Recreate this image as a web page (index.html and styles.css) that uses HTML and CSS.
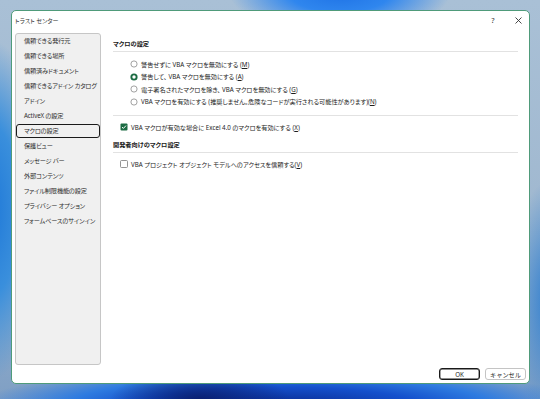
FILE: index.html
```html
<!DOCTYPE html>
<html lang="ja">
<head>
    <meta charset="UTF-8">
    <meta name="viewport" content="width=device-width, initial-scale=1.0">
    <title>トラスト センター</title>
    <link rel="stylesheet" href="styles.css">
</head>
<body>
    <div class="dialog">
        <!-- Title bar -->
        <div class="titlebar">
            <span class="title">トラスト センター</span>
            <span class="help">?</span>
            <span class="close">
                <svg width="7" height="7" viewBox="0 0 7 7"><path d="M0.5 0.5 L6.5 6.5 M6.5 0.5 L0.5 6.5" stroke="#333" stroke-width="0.9" fill="none"/></svg>
            </span>
        </div>

        <div class="main">
            <!-- Left navigation -->
            <ul class="nav">
                <li>信頼できる発行元</li>
                <li>信頼できる場所</li>
                <li>信頼済みドキュメント</li>
                <li>信頼できるアドイン カタログ</li>
                <li>アドイン</li>
                <li>ActiveX の設定</li>
                <li class="selected">マクロの設定</li>
                <li>保護ビュー</li>
                <li>メッセージ バー</li>
                <li>外部コンテンツ</li>
                <li>ファイル制限機能の設定</li>
                <li>プライバシー オプション</li>
                <li>フォームベースのサインイン</li>
            </ul>

            <!-- Settings pane -->
            <div class="content">
                <div class="section-title">マクロの設定</div>

                <div class="radio-list">
                    <div class="radio-row">
                        <svg class="radio" width="8" height="8" viewBox="0 0 8 8"><circle cx="4" cy="4" r="3.1" fill="#fff" stroke="#8a8a8a" stroke-width="0.8"/></svg>
                        <span>警告せずに VBA マクロを無効にする (<u>M</u>)</span>
                    </div>
                    <div class="radio-row">
                        <svg class="radio" width="8" height="8" viewBox="0 0 8 8"><circle cx="4" cy="4" r="3.6" fill="#1c6b43"/><circle cx="4" cy="4" r="1.7" fill="#fff"/></svg>
                        <span>警告して、 VBA マクロを無効にする (<u>A</u>)</span>
                    </div>
                    <div class="radio-row">
                        <svg class="radio" width="8" height="8" viewBox="0 0 8 8"><circle cx="4" cy="4" r="3.1" fill="#fff" stroke="#8a8a8a" stroke-width="0.8"/></svg>
                        <span>電子署名されたマクロを除き、 VBA マクロを無効にする (<u>G</u>)</span>
                    </div>
                    <div class="radio-row">
                        <svg class="radio" width="8" height="8" viewBox="0 0 8 8"><circle cx="4" cy="4" r="3.1" fill="#fff" stroke="#8a8a8a" stroke-width="0.8"/></svg>
                        <span>VBA マクロを有効にする (推奨しません。危険なコードが実行される可能性があります)(<u>N</u>)</span>
                    </div>
                </div>

                <div class="divider"></div>

                <div class="check-row">
                    <svg class="check" width="8" height="8" viewBox="0 0 8 8"><rect x="0.5" y="0.5" width="7" height="7" rx="1" fill="#1c6b43"/><path d="M2 4.1 L3.4 5.4 L6 2.6" stroke="#fff" stroke-width="1" fill="none"/></svg>
                    <span>VBA マクロが有効な場合に Excel 4.0 のマクロを有効にする (<u>X</u>)</span>
                </div>

                <div class="section-title second">開発者向けのマクロ設定</div>

                <div class="check-row">
                    <svg class="check" width="8" height="8" viewBox="0 0 8 8"><rect x="0.5" y="0.5" width="7" height="7" rx="1" fill="#fff" stroke="#7a7a7a" stroke-width="0.8"/></svg>
                    <span>VBA プロジェクト オブジェクト モデルへのアクセスを信頼する(<u>V</u>)</span>
                </div>
            </div>
        </div>

        <!-- Buttons -->
        <div class="footer">
            <button class="btn default">OK</button>
            <button class="btn">キャンセル</button>
        </div>
    </div>
</body>
</html>
```

FILE: styles.css
```css
html, body {
    margin: 0;
    padding: 0;
}

body {
    width: 540px;
    height: 399px;
    overflow: hidden;
    font-family: "Noto Sans", "Noto Sans CJK JP", sans-serif;
    font-feature-settings: "palt";
    color: #1c1c1c;
    background-color: #a3bbd2;
    background-image:
        radial-gradient(ellipse 110px 40px at 340px -6px, #1f73e6 0, #2f86ee 45%, rgba(90, 150, 230, 0) 100%),
        radial-gradient(ellipse 60px 170px at -10px 210px, #1e78d8 0, #3a8fdc 50%, rgba(120, 170, 220, 0) 100%),
        radial-gradient(ellipse 40px 120px at 550px 300px, #2f7fd0 0, rgba(110, 160, 210, 0) 100%),
        radial-gradient(ellipse 90px 30px at 200px 400px, #0a1f70 0, rgba(10, 31, 112, 0) 100%),
        radial-gradient(ellipse 300px 40px at 280px 405px, #0a2a8e 0, #1450cc 45%, #2e7be0 70%, rgba(120, 160, 210, 0) 100%),
        linear-gradient(180deg, #a9c0d6 0%, #9fb7cf 60%, #7f9fc4 100%);
}

.dialog {
    margin: 10px 0 0 11px;
    width: 519px;
    height: 374px;
    box-sizing: border-box;
    background-color: #fff;
    border: 1px solid #4f9b7a;
    border-radius: 5px;
    display: flex;
    flex-direction: column;
    font-size: 6.2px;
}

/* Title bar */
.titlebar {
    height: 18px;
    display: flex;
    align-items: center;
    padding-left: 3px;
}

.title {
    flex: 1;
    color: #333;
    font-size: 6px;
}

.help {
    width: 10px;
    text-align: center;
    font-size: 7.5px;
    color: #333;
    margin-right: 15px;
}

.close {
    width: 10px;
    display: flex;
    justify-content: center;
    margin-right: 6px;
}

/* Main area */
.main {
    display: flex;
    margin-top: 4px;
    padding: 0 11px 0 3px;
    gap: 12px;
}

.nav {
    list-style: none;
    margin: 0;
    padding: 0;
    width: 86px;
    height: 332px;
    box-sizing: border-box;
    background-color: #f0f0f0;
    border: 1px solid #c6c6c6;
    border-radius: 3px;
}

.nav li {
    height: 14px;
    line-height: 12.5px;
    margin-bottom: 1px;
    padding-left: 7px;
    box-sizing: border-box;
    color: #2e2e2e;
    white-space: nowrap;
    letter-spacing: -0.15px;
    border: 1px solid transparent;
    border-radius: 3px;
}

.nav li.selected {
    border-color: #1a1a1a;
}

.content {
    flex: 1;
    padding-top: 4px;
}

.section-title {
    height: 14px;
    line-height: 14px;
    font-weight: bold;
    color: #1a1a1a;
    border-bottom: 1px solid #e2e2e2;
}

.section-title.second {
    margin-top: 5px;
}

.radio-list {
    margin-top: 6px;
    padding-left: 17px;
}

.radio-row {
    height: 12.5px;
    display: flex;
    align-items: center;
    gap: 3px;
    white-space: nowrap;
}

.divider {
    height: 1px;
    background-color: #e2e2e2;
    margin-top: 7px;
}

.check-row {
    height: 12px;
    margin-top: 5px;
    padding-left: 7px;
    display: flex;
    align-items: center;
    gap: 3px;
    white-space: nowrap;
}

u {
    text-underline-offset: 1px;
}

/* Footer buttons */
.footer {
    display: flex;
    justify-content: flex-end;
    gap: 5px;
    margin-top: 3px;
    padding-right: 3px;
}

.btn {
    width: 41px;
    height: 12px;
    padding: 0;
    font-family: inherit;
    font-size: 6.2px;
    color: #1c1c1c;
    background-color: #fff;
    border: 1px solid #c4c4c4;
    border-radius: 3px;
}

.btn.default {
    border: 1px solid #1a1a1a;
    box-shadow: inset 0 0 0 0.4px #1a1a1a;
}
```
